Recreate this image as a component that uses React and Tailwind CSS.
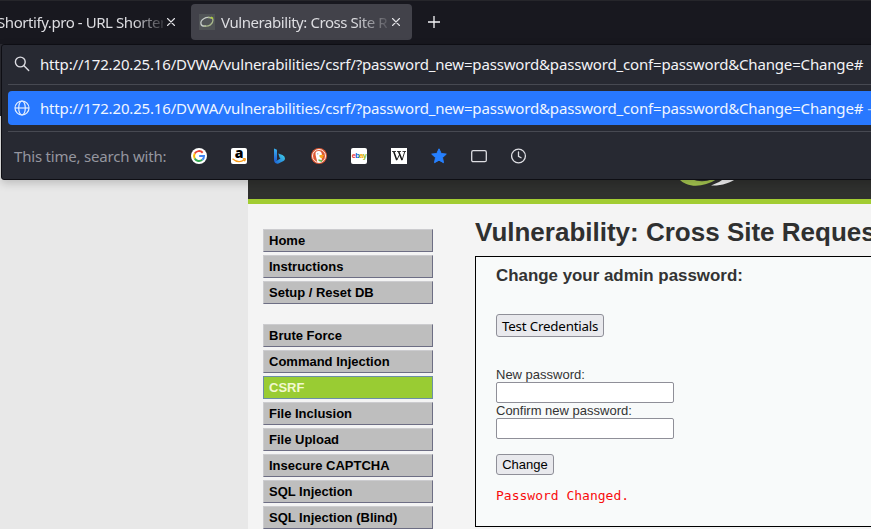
import React from 'react';

const ui = "font-['Noto_Sans',sans-serif]";
const url = 'http://172.20.25.16/DVWA/vulnerabilities/csrf/?password_new=password&password_conf=password&Change=Change#';

const groups = [
  ['Home', 'Instructions', 'Setup / Reset DB'],
  ['Brute Force', 'Command Injection', 'CSRF', 'File Inclusion', 'File Upload', 'Insecure CAPTCHA', 'SQL Injection', 'SQL Injection (Blind)'],
];

function Close() {
  return (
    <svg className="h-2 w-2 shrink-0" viewBox="0 0 8 8" stroke="#e4e4e8" strokeWidth="1.1" strokeLinecap="round">
      <path d="M.5 .5l7 7M7.5 .5l-7 7" />
    </svg>
  );
}

function Tabs() {
  return (
    <div className={`flex h-11 shrink-0 items-start border-t border-[#26262b] bg-[#18181f] pt-[3px] text-[15px] tracking-[-0.43px] text-[#dddde1] ${ui}`}>
      <div className="flex h-9 w-[191px] items-center">
        <div className="-ml-[3px] w-[166px] overflow-hidden whitespace-nowrap [mask-image:linear-gradient(to_right,black_136px,transparent_172px)]">Shortify.pro - URL Shorten</div>
        <div className="ml-1 flex"><Close /></div>
      </div>
      <div className="flex h-9 w-[221px] items-center rounded bg-[#42424a] pl-2">
        <svg className="h-4 w-4 shrink-0" viewBox="0 0 16 16" fill="none">
          <path d="M0 0h16v16H0z" fill="#505356" />
          <path d="M12 4C7 2 1 6 2 10c.5 2 3 2.300 5 2" stroke="#c5cbc7" strokeWidth="1.300" />
          <path d="M5 12c5 1 9-2 9-6 0-2-2-3-5-2.500" stroke="#a9b88c" strokeWidth="1.300" />
          <path d="M12 3.200l2 1.500" stroke="#b3d33a" strokeWidth="1.500" />
        </svg>
        <div className="ml-[6px] w-[166px] overflow-hidden whitespace-nowrap [mask-image:linear-gradient(to_right,black_134px,transparent_172px)]">Vulnerability: Cross Site R</div>
        <div className="ml-[5px] flex"><Close /></div>
      </div>
      <svg className="ml-4 mt-3 h-3 w-3" viewBox="0 0 12 12" stroke="#f4f4f7" strokeWidth="1.3"><path d="M6 0v12M0 6h12" /></svg>
    </div>
  );
}

function Engines() {
  return (
    <div className="flex items-center gap-6">
      <svg className="h-4 w-4" viewBox="0 0 16 16" fill="none">
        <circle cx="8" cy="8" r="8" fill="#fff" />
        <g strokeWidth="2">
          <path d="M11.700 4.700A5 5 0 0 0 3.700 5.600" stroke="#e94335" />
          <path d="M3.700 5.600a5 5 0 0 0 0 4.800" stroke="#fbbc05" />
          <path d="M3.700 10.400a5 5 0 0 0 7.600 1.400" stroke="#34a853" />
          <path d="M11.300 11.800A5 5 0 0 0 13 8H8.200" stroke="#4285f4" />
        </g>
      </svg>
      <div className="relative h-4 w-4 rounded-[2px] bg-white">
        <span className="absolute inset-x-0 -top-[3px] text-center font-['Open_Sans',sans-serif] text-[14px] leading-[15px] font-extrabold text-black">a</span>
        <svg className="absolute inset-0 h-4 w-4" viewBox="0 0 16 16" fill="none" stroke="#f79a18" strokeWidth="1.300"><path d="M1.500 10.800c4 3.500 8.500 3.400 12 .9M11.700 10.900c2-.5 2.900-.3 2.600.3-.1 1-.4 1.500-.9 2" /></svg>
      </div>
      <svg className="h-4 w-4" viewBox="0 0 16 16">
        <defs>
          <linearGradient id="bingStem" x1="0" y1="0" x2="0" y2="1"><stop stopColor="#39b2f0" /><stop offset="1" stopColor="#2056d0" /></linearGradient>
          <linearGradient id="bingBowl" x1="0" y1="1" x2="1" y2="0"><stop stopColor="#1b64d8" /><stop offset="1" stopColor="#43d6e8" /></linearGradient>
        </defs>
        <path d="M3 .5 5.500 1.400Q6 1.600 6 2.200V12L4.500 14.500Q3 14 3 12z" fill="url(#bingStem)" />
        <path d="M7.300 5.500 11.500 7Q14 8 14 10.500 14 12 12.500 13L7.500 15.500Q5 16.200 3.500 14L9.500 10.500 8.600 9.800z" fill="url(#bingBowl)" />
      </svg>
      <svg className="h-4 w-4" viewBox="0 0 16 16">
        <circle cx="8" cy="8" r="8" fill="#de5833" />
        <circle cx="8" cy="8" r="6.500" fill="none" stroke="#fff" strokeWidth=".9" />
        <path d="M4.500 5.200C4.700 3.200 7 2.300 9 3.300c1.800.9 2 2.700 1.900 4.200l-.2 6.200c-1.700.8-3.200.8-4.500.1C5.700 10.500 4.300 7.500 4.500 5.200z" fill="#fff" />
        <path d="M8.300 7.300C10 6.500 13 6.500 13 7.600c0 .8-1.400.9-1.500 1.300.7.500.9 1 .1 1.200-1.500.4-3.600-1-3.300-2.800z" fill="#fba51a" />
        <path d="M7.500 11.300l3.800.9-.5 1.700-3.300-.8z" fill="#67b64a" />
        <circle cx="6.800" cy="5.800" r=".6" fill="#6b8ba5" />
      </svg>
      <div className="flex h-4 w-4 items-center justify-center rounded-[2px] bg-white font-['Liberation_Sans',sans-serif] text-[7.5px] leading-none font-bold tracking-[-0.7px]">
        <span className="text-[#e53238]">e</span><span className="text-[#0064d2]">b</span><span className="text-[#f5af02]">a</span><span className="text-[#86b817]">y</span>
      </div>
      <svg className="h-4 w-4 bg-white" viewBox="0 0 16 16" fill="none" stroke="#151515">
        <path d="M1 3.500h4M6 3.500h4M11.500 3.500H15" strokeWidth=".8" />
        <path d="M2.700 3.500l3 8.500M7.600 3.500l3.400 8.500" strokeWidth="1.500" />
        <path d="M5.700 12.300l3-6M11 12.300l2.800-8.800" strokeWidth=".9" />
      </svg>
      <svg className="h-4 w-4" viewBox="0 0 16 16" fill="#2680ff" stroke="#2680ff" strokeLinejoin="round"><path d="M8 .8l2.200 4.700 5.100.6-3.800 3.500 1 5.100L8 12.200l-4.500 2.500 1-5.100L.7 6.100l5.100-.6z" /></svg>
      <svg className="h-4 w-4" viewBox="0 0 16 16" fill="none" stroke="#dedee3" strokeWidth="1.300"><rect x=".7" y="2.700" width="14.600" height="11" rx="1.500" /></svg>
      <svg className="h-4 w-4" viewBox="0 0 16 16" fill="none" stroke="#dedee3" strokeWidth="1.300" strokeLinecap="round"><circle cx="7.500" cy="8" r="6.900" /><path d="M7.500 4v4.300l2.600 1.500" /></svg>
    </div>
  );
}

function AddressPopup() {
  return (
    <div className={`absolute top-11 left-px h-[136px] w-[900px] rounded-[3px] border border-[#0e0e14] bg-[#272932] pl-1.5 text-[15px] tracking-[-0.163px] shadow-[0_3px_10px_rgba(0,0,0,0.2)] ${ui}`}>
      <div className="flex h-10 items-center border-b border-[#474952] pb-px pl-1.5 text-[#f3f3f6]">
        <svg className="h-4 w-4 shrink-0" viewBox="0 0 16 16" fill="none" stroke="#dcdce2" strokeWidth="1.400" strokeLinecap="round"><circle cx="6.300" cy="6" r="4.900" /><path d="M10 9.700l4.700 4.700" /></svg>
        <span className="ml-2.5 whitespace-nowrap">{url}</span>
      </div>
      <div className="mt-1.5 flex h-[34px] items-center rounded bg-[#2878ff] pl-1.5 text-[#f0f6ff]">
        <svg className="h-4 w-4 shrink-0" viewBox="0 0 16 16" fill="none" stroke="#e4efff" strokeWidth="1.200"><circle cx="8" cy="8" r="7" /><ellipse cx="8" cy="8" rx="3.300" ry="7" /><path d="M1 8h14" /></svg>
        <span className="ml-2.5 whitespace-nowrap">{url}</span>
        <span className="ml-1 whitespace-nowrap text-[#a9c9ff]">—</span>
      </div>
      <div className="mt-1.5 flex h-12 items-center border-t border-[#474952] pl-1.5">
        <span className="w-[177px] pt-0.5 tracking-[-0.2px] whitespace-nowrap text-[#95969f]">This time, search with:</span>
        <Engines />
      </div>
    </div>
  );
}

function Menu() {
  return (
    <nav className="flex w-[170px] shrink-0 flex-col gap-5 pt-[25px]">
      {groups.map((items) => (
        <ul key={items[0]} className="flex flex-col gap-[3px]">
          {items.map((name) => (
            <li key={name} className={`h-[23px] border pl-[5px] text-[13px] leading-[21px] font-bold whitespace-nowrap ${name === 'CSRF' ? 'border-[#6c8fa6] bg-[#99cc33] text-[#f2f8cf]' : 'border-t-[#cccccf] border-r-[#6d6e84] border-b-[#6d6e84] border-l-[#cccccf] bg-[#bebebe] text-black'}`}>{name}</li>
          ))}
        </ul>
      ))}
    </nav>
  );
}

function Content() {
  return (
    <main className="ml-[42px] w-[500px] shrink-0 pt-3 text-[13px] text-[#333]">
      <h1 className="h-10 text-[26px] leading-8 font-bold whitespace-nowrap text-[#2f3030]">Vulnerability: Cross Site Request</h1>
      <section className="flex h-[271px] flex-col items-start border border-black bg-[#f8fafa] pl-5">
        <h3 className="mt-[9px] text-[16.9px] leading-5 font-bold">Change your admin password:</h3>
        <button className={`mt-7 h-[23px] rounded-[3px] border border-[#8f8f98] bg-[#e9e9ed] px-[5px] pt-px text-[13.33px] leading-[21px] tracking-[-0.19px] text-black ${ui}`}>Test Credentials</button>
        <label className="mt-[30px] h-[15px] leading-[15px]">New password:</label>
        <input className="h-[21px] w-[178px] rounded-[2px] border border-[#8f8f98] bg-white" />
        <label className="h-[15px] leading-[15px]">Confirm new password:</label>
        <input className="h-[21px] w-[178px] rounded-[2px] border border-[#8f8f98] bg-white" />
        <button className="mt-[15px] h-[21px] w-[58px] rounded-[3px] border border-[#8f8f98] bg-[#e9e9ed] text-[13px] leading-[19px] text-black">Change</button>
        <pre className="mt-[13px] font-['DejaVu_Sans_Mono',monospace] text-[13px] leading-4 text-[#f80c0c]">Password Changed.</pre>
      </section>
    </main>
  );
}

export default function App() {
  return (
    <div className="relative flex h-[529px] w-[871px] flex-col overflow-hidden bg-[#e8e8e8] font-['Liberation_Sans',sans-serif]">
      <Tabs />
      <div className="h-[72px] shrink-0 bg-[#2b2b32]" />
      <div className="ml-[248px] flex h-[413px] shrink-0 flex-col bg-[#f4f4f4]">
        <header className="h-[88px] shrink-0 border-b-[5px] border-[#a2cc32] bg-[#2f302e]">
          <svg className="mt-[50px] ml-[428px] h-5 w-[90px]" viewBox="0 0 90 20">
            <path d="M3 13c8 9 24 9 38 0z" fill="#a5c54f" />
            <path d="M16 13c6 3 14 3 20 0z" fill="#2f302e" />
            <path d="M35 19.500c10 .5 19-2.500 26-7.500H49q-6 5-14 7.500z" fill="#f3f3f3" />
          </svg>
        </header>
        <div className="flex pl-[15px]">
          <Menu />
          <Content />
        </div>
      </div>
      <AddressPopup />
    </div>
  );
}
